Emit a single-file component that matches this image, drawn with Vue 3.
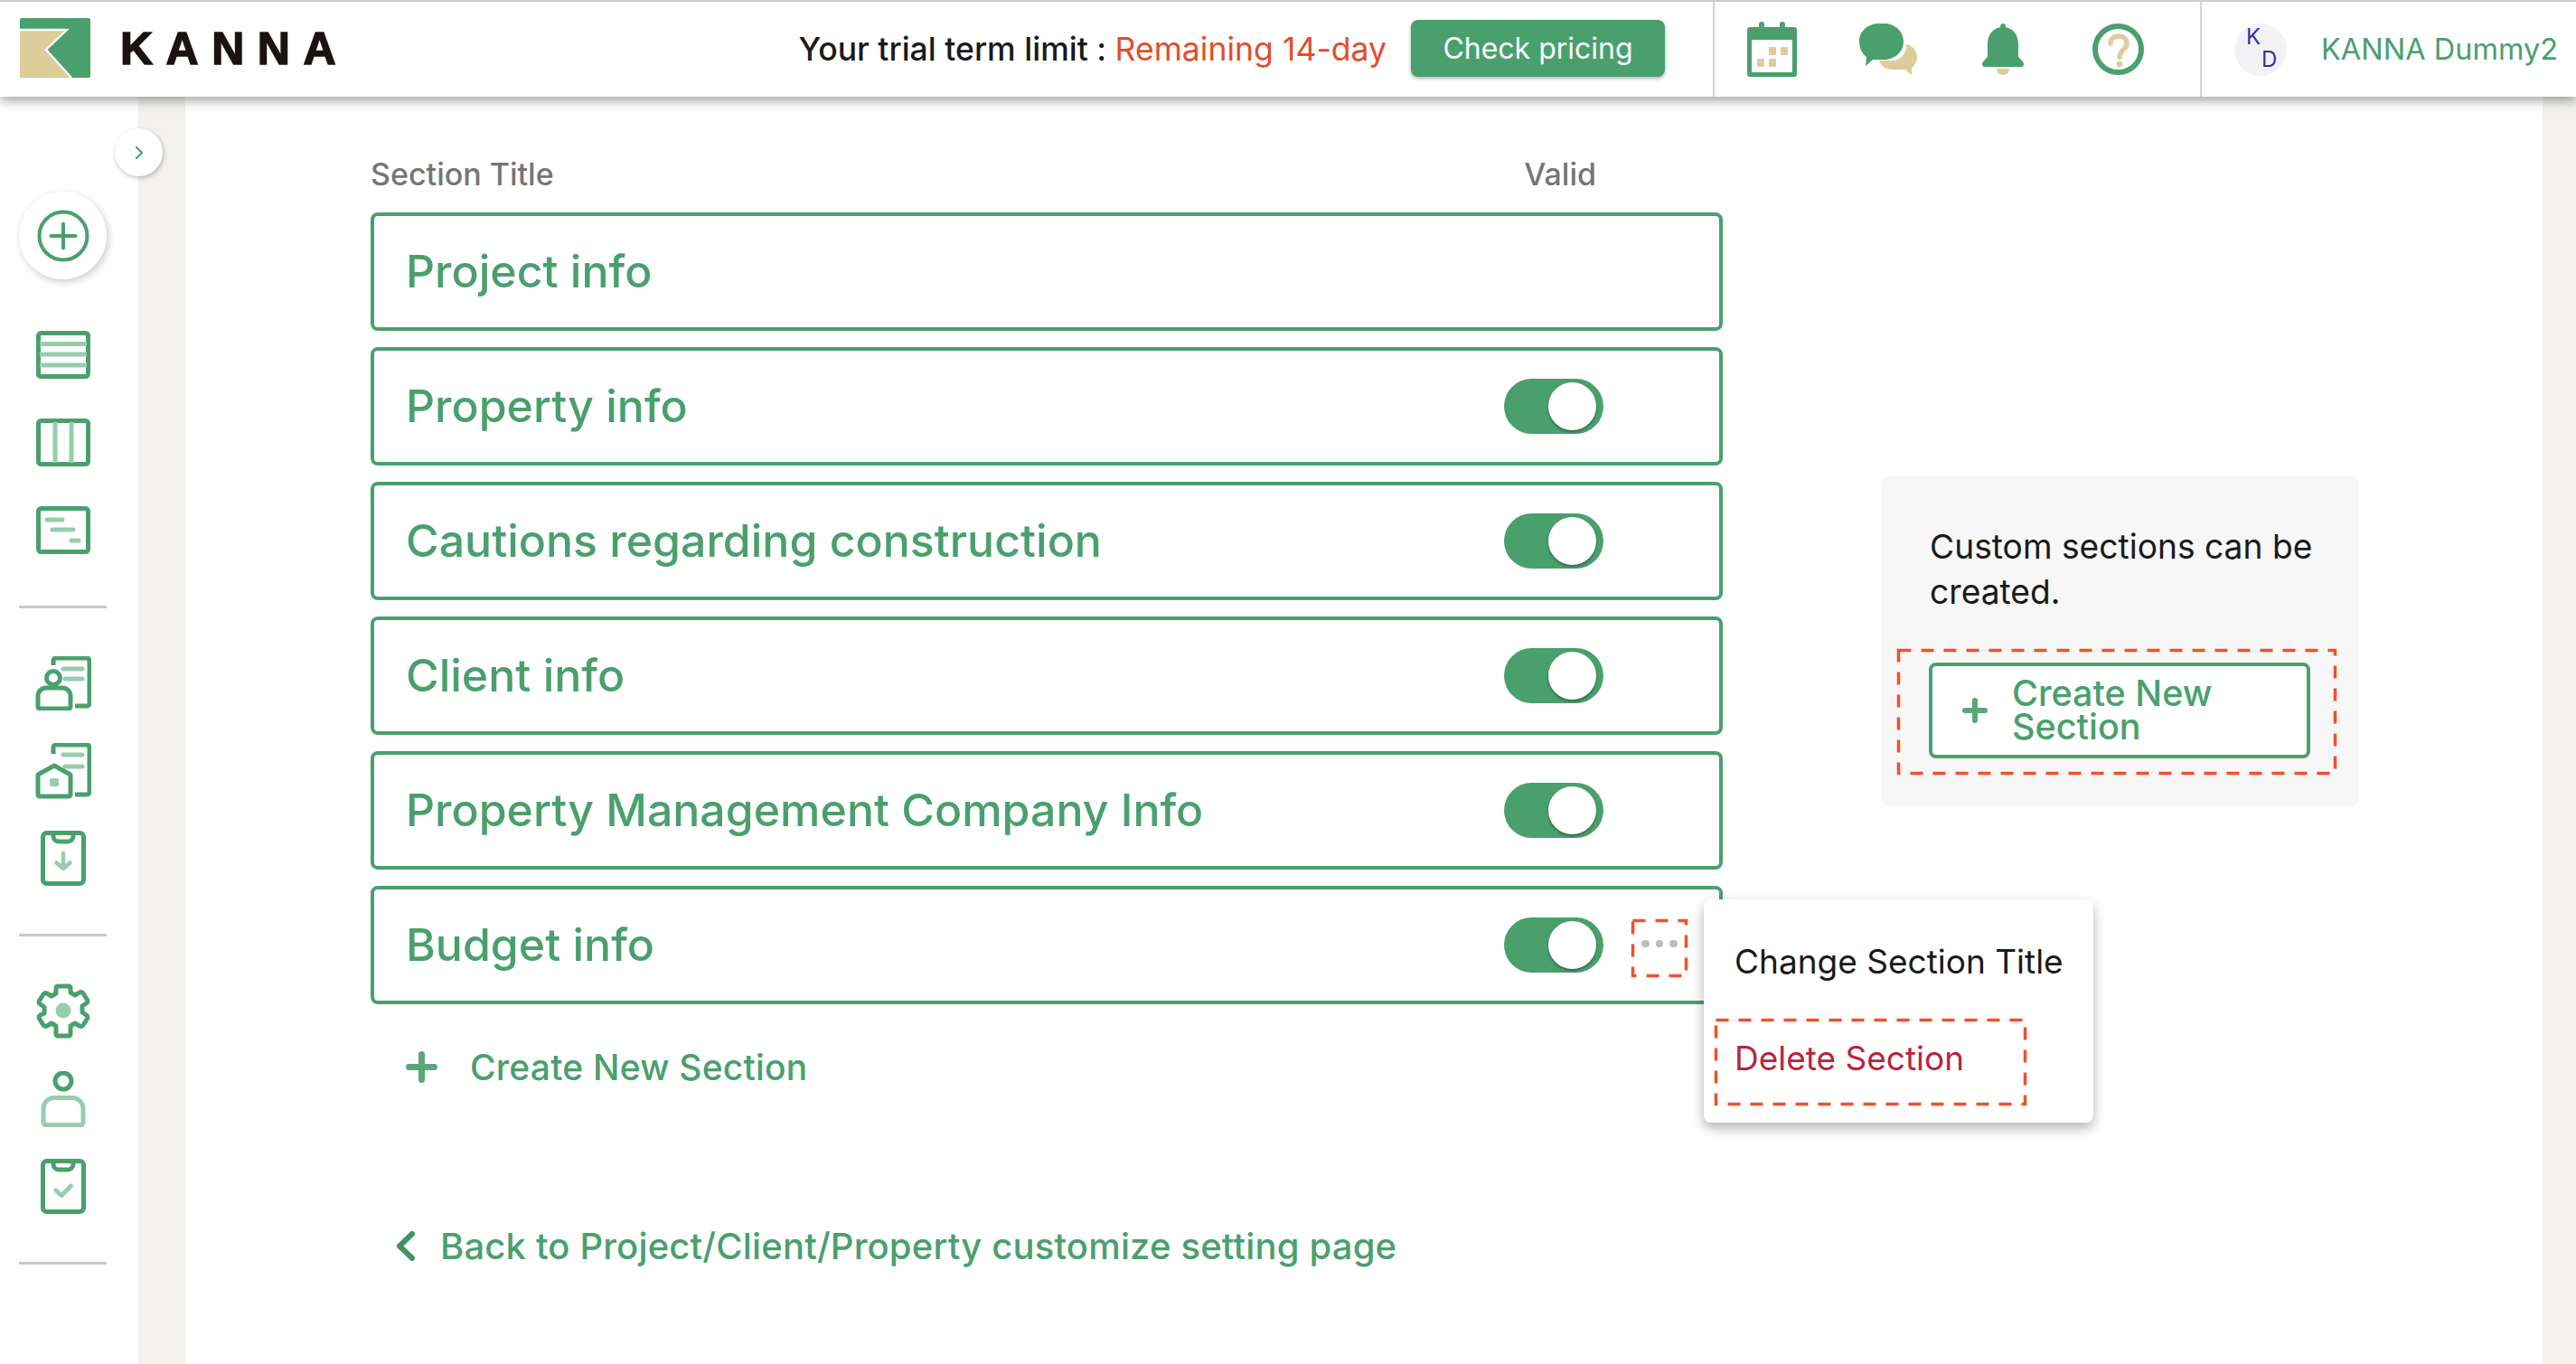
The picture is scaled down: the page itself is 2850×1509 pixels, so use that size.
<script setup>
const sections = [
  { title: 'Project info', toggle: false },
  { title: 'Property info', toggle: true },
  { title: 'Cautions regarding construction', toggle: true },
  { title: 'Client info', toggle: true },
  { title: 'Property Management Company Info', toggle: true },
  { title: 'Budget info', toggle: true, more: true },
]
</script>

<template>
  <div class="page">
    <header class="topbar">
      <div class="brand">
        <svg class="logo" viewBox="0 0 78 66" width="78" height="66">
          <rect width="78" height="66" rx="2" fill="#4aa06d" />
          <path d="M0 13H52L29 35 57 66H2a2 2 0 0 1-2-2Z" fill="#dccd9b" />
          <path d="M0 13H52L29 35 57 66" fill="none" stroke="#fff" stroke-width="2.4" />
        </svg>
        <span class="wordmark">KANNA</span>
      </div>
      <div class="trial">
        <span class="trial-text">Your trial term limit : <em>Remaining 14-day</em></span>
        <button class="pricing">Check pricing</button>
      </div>
      <div class="tools">
        <svg width="55" height="61" viewBox="0 0 55 61">
          <path d="M3 6H13V3a3 3 0 0 1 6 0V6H36V3a3 3 0 0 1 6 0V6H52a3 3 0 0 1 3 3V58a3 3 0 0 1-3 3H3a3 3 0 0 1-3-3V9a3 3 0 0 1 3-3Z" fill="#4aa06d" />
          <rect x="5" y="20" width="45" height="36" fill="#fff" />
          <g fill="#dccd9b"><rect x="24" y="28" width="8" height="9" rx="1" /><rect x="37" y="28" width="8" height="9" rx="1" /><rect x="11" y="41" width="8" height="9" rx="1" /><rect x="24" y="41" width="8" height="9" rx="1" /></g>
        </svg>
        <svg width="64" height="57" viewBox="0 0 64 57">
          <path d="M52 23c7 1 12 7 12 14 0 6-3 10-6 12l0 8-7-6H36c-7 0-12-4-14-10h14c9 0 16-7 16-16Z" fill="#dccd9b" />
          <path d="M22 0h5c12 0 22 8 22 20s-10 20-22 20H15l-8 7 1-10C3 33 0 27 0 20 0 8 10 0 22 0Z" fill="#4aa06d" />
        </svg>
        <svg class="tool-bell" width="46" height="57" viewBox="0 0 46 57">
          <path d="M23 0c2 0 3 1.500 3 4 9 2 14 9 14 19v12c0 4 6 6 6 10 0 2-1 3-3 3H3c-2 0-3-1-3-3 0-4 6-6 6-10V23C6 13 11 6 20 4c0-2.500 1-4 3-4Z" fill="#4aa06d" />
          <path d="M16 50h14c0 4-3 7-7 7s-7-3-7-7Z" fill="#dccd9b" />
        </svg>
        <svg class="tool-help" width="57" height="57" viewBox="0 0 57 57">
          <circle cx="28.500" cy="28.500" r="25.500" fill="none" stroke="#4aa06d" stroke-width="6" />
          <path d="M20 22c0-5 4-8 9-8s9 3 9 8c0 7-8 7-8 15" fill="none" stroke="#dccd9b" stroke-width="5.500" stroke-linecap="round" />
          <circle cx="30" cy="45" r="3.400" fill="#dccd9b" />
        </svg>
      </div>
      <div class="user">
        <span class="avatar"><i>K</i><b>D</b></span>
        <span class="user-name">KANNA Dummy2</span>
      </div>
    </header>

    <div class="body">
      <aside class="side">
        <button class="collapse">
          <svg width="12" height="16" viewBox="0 0 12 16"><path d="M3 2l6 6-6 6" fill="none" stroke="#4aa06d" stroke-width="2.200" stroke-linecap="round" stroke-linejoin="round" /></svg>
        </button>
        <button class="add">
          <svg width="58" height="58" viewBox="0 0 58 58">
            <circle cx="29" cy="29" r="26.500" fill="none" stroke="#4aa06d" stroke-width="4" />
            <path d="M29 15.500v27M15.500 29h27" stroke="#4aa06d" stroke-width="4" stroke-linecap="round" />
          </svg>
        </button>
        <nav class="nav-group">
          <span class="nav-item"><svg width="60" height="53" viewBox="0 0 60 53"><rect x="2.500" y="2.500" width="55" height="48" rx="3" class="ic" /><path d="M4 14.500h52M4 26h52M4 38h52" class="ic-soft" /></svg></span>
          <span class="nav-item"><svg width="60" height="53" viewBox="0 0 60 53"><rect x="2.500" y="2.500" width="55" height="48" rx="3" class="ic" /><path d="M21 4v45M39 4v45" class="ic-soft" /></svg></span>
          <span class="nav-item"><svg width="60" height="53" viewBox="0 0 60 53"><rect x="2.500" y="2.500" width="55" height="48" rx="3" class="ic" /><path d="M12 15h17M18 26h23M39 38h8" class="ic-soft" stroke-linecap="round" /></svg></span>
        </nav>
        <hr class="rule" />
        <nav class="nav-group">
          <span class="nav-item"><svg width="62" height="60" viewBox="0 0 62 60"><path d="M20 10V5a3 3 0 0 1 3-3h34a3 3 0 0 1 3 3v47a3 3 0 0 1-3 3H44" class="ic" /><path d="M31 14h21M33 25h19" class="ic-soft" stroke-linecap="round" /><circle cx="20" cy="24" r="7.500" class="ic" /><path d="M12 35h18a9 9 0 0 1 9 9v12a2 2 0 0 1-2 2H5a2 2 0 0 1-2-2V44a9 9 0 0 1 9-9Z" class="ic" /></svg></span>
          <span class="nav-item"><svg width="62" height="62" viewBox="0 0 62 62"><path d="M20 12V5a3 3 0 0 1 3-3h34a3 3 0 0 1 3 3v49a3 3 0 0 1-3 3H44" class="ic" /><path d="M31 13h21M33 26h19" class="ic-soft" stroke-linecap="round" /><path d="M3 35 21 25 39 35V57a2 2 0 0 1-2 2H5a2 2 0 0 1-2-2Z" class="ic" stroke-linejoin="round" /><rect x="16" y="39" width="10" height="9" rx="2" fill="#98ccae" /></svg></span>
          <span class="nav-item"><svg width="50" height="61" viewBox="0 0 50 61"><rect x="2.500" y="2.500" width="45" height="56" rx="4" class="ic" /><path d="M14 3v3a6 6 0 0 0 6 6h10a6 6 0 0 0 6-6V3" class="ic" /><path d="M25 25v17M17.500 35.500 25 42l7.500-6.500" fill="none" stroke="#98ccae" stroke-width="4.500" stroke-linecap="round" stroke-linejoin="round" /></svg></span>
        </nav>
        <hr class="rule" />
        <nav class="nav-group">
          <span class="nav-item"><svg width="60" height="62" viewBox="0 0 60 62"><path d="M24 3h12a2 2 0 0 1 2 2v5l5 3 5-3a3 3 0 0 1 4 1l4.500 7a3 3 0 0 1-1 4l-4.500 3v7l4.500 3a3 3 0 0 1 1 4L52 46a3 3 0 0 1-4 1l-5-3-5 3v9a2 2 0 0 1-2 2H24a2 2 0 0 1-2-2v-9l-5-3-5 3a3 3 0 0 1-4-1l-4.500-7a3 3 0 0 1 1-4L9 33V26l-4.500-3a3 3 0 0 1-1-4L8 12a3 3 0 0 1 4-1l5 3 5-3V5a2 2 0 0 1 2-2Z" class="ic" stroke-linejoin="round" /><circle cx="30" cy="30" r="8.500" fill="#98ccae" /></svg></span>
          <span class="nav-item"><svg width="50" height="62" viewBox="0 0 50 62"><circle cx="25" cy="11" r="9" class="ic" /><path d="M15 29.500h20a12 12 0 0 1 12 12v15a3 3 0 0 1-3 3H6a3 3 0 0 1-3-3v-15a12 12 0 0 1 12-12Z" fill="none" stroke="#98ccae" stroke-width="5" /></svg></span>
          <span class="nav-item"><svg width="50" height="61" viewBox="0 0 50 61"><rect x="2.500" y="2.500" width="45" height="56" rx="4" class="ic" /><path d="M14 3v3a6 6 0 0 0 6 6h10a6 6 0 0 0 6-6V3" class="ic" /><path d="M17 35l6 5.500L33.500 30" fill="none" stroke="#98ccae" stroke-width="5" stroke-linecap="round" stroke-linejoin="round" /></svg></span>
        </nav>
        <hr class="rule" />
      </aside>
      <div class="gutter"></div>

      <main class="main">
        <section class="list">
          <div class="list-head"><span>Section Title</span><span class="valid">Valid</span></div>
          <div v-for="s in sections" :key="s.title" class="row">
            <span class="row-title">{{ s.title }}</span>
            <span v-if="s.toggle" class="toggle"><span class="knob"></span></span>
            <span v-if="s.more" class="more">
              <svg class="dash"><rect x="1.500" y="1.500" class="dash-rect" /></svg>
              <i></i><i></i><i></i>
            </span>
          </div>
          <div class="create-link">
            <svg width="35" height="35" viewBox="0 0 35 35"><path d="M17.500 3.500v28M3.500 17.500h28" stroke="#5aa878" stroke-width="7" stroke-linecap="round" /></svg>
            <span>Create New Section</span>
          </div>
          <div class="back-link">
            <svg width="21" height="33" viewBox="0 0 21 33"><path d="M18 3 4 16.500 18 30" fill="none" stroke="#3f9463" stroke-width="6" stroke-linecap="round" stroke-linejoin="round" /></svg>
            <span>Back to Project/Client/Property customize setting page</span>
          </div>
        </section>

        <aside class="panel">
          <p>Custom sections can be created.</p>
          <div class="panel-action">
            <svg class="dash"><rect x="1.500" y="1.500" class="dash-rect" /></svg>
            <button class="create-btn">
              <svg width="28" height="28" viewBox="0 0 28 28"><path d="M14 3v22M3 14h22" stroke="#5aa878" stroke-width="6" stroke-linecap="round" /></svg>
              <span>Create New Section</span>
            </button>
          </div>
        </aside>

        <div class="menu">
          <div class="menu-item">Change Section Title</div>
          <div class="menu-item danger">
            <svg class="dash"><rect x="1.500" y="1.500" class="dash-rect" /></svg>
            Delete Section
          </div>
        </div>
      </main>
      <div class="gutter-right"></div>
    </div>
  </div>
</template>

<style>
html, body { margin: 0; background: #fff; }
</style>

<style scoped>
.page { width: 2850px; height: 1509px; overflow: hidden; display: flex; flex-direction: column; font-family: Inter, "Noto Sans", sans-serif; color: #1a1a1a; }
button { font-family: inherit; }

.topbar { position: relative; z-index: 3; box-sizing: border-box; height: 107px; flex: none; display: flex; align-items: stretch; background: #fff; border-top: 2px solid #cfcfcf; box-shadow: 0 4px 12px rgba(0,0,0,.38); }
.brand { display: flex; align-items: center; padding-left: 22px; gap: 33px; }
.logo { display: block; margin-top: -3px; }
.wordmark { font-family: "Liberation Sans", sans-serif; font-weight: 700; font-size: 50px; letter-spacing: 14.500px; color: #1a1311; margin-top: -1px; -webkit-text-stroke: 1.500px #1a1311; }
.trial { margin-left: auto; display: flex; align-items: center; gap: 27px; padding-right: 53px; border-right: 2px solid #d4d4d4; }
.trial-text { font-size: 35.600px; font-weight: 500; }
.trial-text em { font-style: normal; font-weight: 400; color: #e04e2a; }
.pricing { width: 281px; height: 63px; margin-top: -2px; border: 0; border-radius: 8px; background: #4aa06d; color: #fff; font-size: 32px; box-shadow: 0 2px 4px rgba(0,0,0,.3); }
.tools { flex: none; display: flex; align-items: center; width: 539px; box-sizing: border-box; padding-left: 36px; gap: 69px; border-right: 2px solid #d4d4d4; }
.tool-bell { margin-left: 3px; }
.tool-help { margin-left: 7px; }
.user { flex: none; width: 414px; box-sizing: border-box; display: flex; align-items: center; padding-left: 36px; gap: 38px; }
.avatar { position: relative; width: 58px; height: 58px; border-radius: 50%; background: #f3f3f5; color: #3a2aa8; font-size: 24px; }
.avatar i, .avatar b { position: absolute; font-style: normal; font-weight: 400; line-height: 24px; }
.avatar i { left: 13px; top: 3px; }
.avatar b { left: 30px; top: 28px; }
.user-name { color: #4aa06d; font-size: 32.500px; white-space: nowrap; margin-top: -1px; }

.body { flex: 1; min-height: 0; display: flex; }
.side { position: relative; width: 153px; flex: none; background: #fff; display: flex; flex-direction: column; padding-top: 105px; box-sizing: border-box; }
.collapse { position: absolute; z-index: 1; left: 127px; top: 35px; width: 53px; height: 53px; padding: 0; border: 0; border-radius: 50%; background: #fff; display: flex; align-items: center; justify-content: center; box-shadow: 1px 2px 5px rgba(0,0,0,.25); }
.add { margin: 0 0 1px 21px; width: 97px; height: 97px; padding: 0; border: 0; border-radius: 50%; background: #fff; display: flex; align-items: center; justify-content: center; box-shadow: 2px 3px 8px rgba(0,0,0,.2); flex: none; }
.nav-group { display: flex; flex-direction: column; width: 139px; margin-top: 34px; }
.nav-item { height: 97px; display: flex; align-items: center; justify-content: center; }
.nav-item svg { display: block; }
.ic { fill: none; stroke: #4aa06d; stroke-width: 5; }
.ic-soft { fill: none; stroke: #98ccae; stroke-width: 5; }
.rule { width: 97px; height: 3px; margin: 35px 0 0 21px; border: 0; background: #c8c8c8; flex: none; }

.gutter { width: 52px; flex: none; background: #f2f1ee; }
.gutter-right { width: 37px; flex: none; background: #f2f1ee; }

.main { position: relative; flex: 1; min-width: 0; display: flex; align-items: flex-start; padding: 66px 0 0 205px; box-sizing: border-box; background: #fff; }
.list { width: 1496px; flex: none; }
.list-head { display: flex; height: 40px; line-height: 40px; margin-bottom: 22px; font-size: 34px; color: #757575; font-weight: 500; }
.valid { margin-left: auto; margin-right: 140px; }
.row { position: relative; box-sizing: border-box; height: 131px; margin-bottom: 18px; display: flex; align-items: center; justify-content: space-between; padding: 0 128px 0 35px; border: 4px solid #4aa06d; border-radius: 8px; background: #fff; }
.row-title { font-size: 50px; font-weight: 500; color: #4aa06d; margin-top: -2px; }
.toggle { display: block; position: relative; width: 110px; height: 61px; border-radius: 31px; background: #4aa06d; }
.knob { position: absolute; right: 8px; top: 4px; width: 53px; height: 53px; border-radius: 50%; background: #fff; box-shadow: 0 2px 3px rgba(0,0,0,.35); }
.more { position: absolute; right: 35px; top: 33px; width: 62px; height: 64px; display: flex; align-items: center; justify-content: center; gap: 7px; padding-bottom: 10px; box-sizing: border-box; }
.more i { width: 8.500px; height: 8.500px; border-radius: 50%; background: #bdbdbd; }
.dash { position: absolute; left: 0; top: 0; width: 100%; height: 100%; overflow: visible; pointer-events: none; }
.dash-rect { width: calc(100% - 3px); height: calc(100% - 3px); fill: none; stroke: #f2502c; stroke-width: 3.500; stroke-dasharray: 14 11; }

.create-link { display: flex; align-items: center; padding-left: 39px; gap: 36px; margin-top: 49px; height: 40px; color: #4aa06d; font-size: 39px; font-weight: 500; letter-spacing: .2px; }
.create-link svg, .create-btn svg, .back-link svg { flex: none; display: block; }
.back-link { display: flex; align-items: center; padding-left: 28px; gap: 28px; margin-top: 158px; height: 40px; color: #4aa06d; font-size: 40px; font-weight: 500; letter-spacing: .16px; white-space: nowrap; }

.panel { margin: 354px 0 0 176px; width: 528px; height: 365px; flex: none; background: #f7f7f7; border-radius: 8px; box-sizing: border-box; padding: 53px 17px 0; }
.panel p { margin: 0 0 38px; padding: 0 0 0 36px; font-size: 37.200px; line-height: 50px; }
.panel-action { position: relative; box-sizing: border-box; width: 486px; height: 139px; padding: 15px 29px 0 35px; }
.create-btn { box-sizing: border-box; width: 422px; height: 106px; display: flex; align-items: center; gap: 27px; padding: 0 0 0 33px; border: 4px solid #4aa06d; border-radius: 8px; background: #fff; color: #4aa06d; font-size: 39.500px; font-weight: 500; line-height: 37px; text-align: left; }
.create-btn span { width: 270px; }

.menu { position: absolute; z-index: 2; left: 1680px; top: 888px; width: 431px; height: 247px; box-sizing: border-box; padding: 12px 35px 0 12px; background: #fff; border-radius: 8px; box-shadow: 0 6px 14px rgba(0,0,0,.3); font-size: 37px; }
.menu-item { height: 96px; padding: 25px 0 0 22px; box-sizing: border-box; line-height: 64px; white-space: nowrap; }
.danger { position: relative; margin-top: 24px; height: 96px; padding-top: 8px; line-height: 72px; color: #b8243a; width: 345px; }
</style>
